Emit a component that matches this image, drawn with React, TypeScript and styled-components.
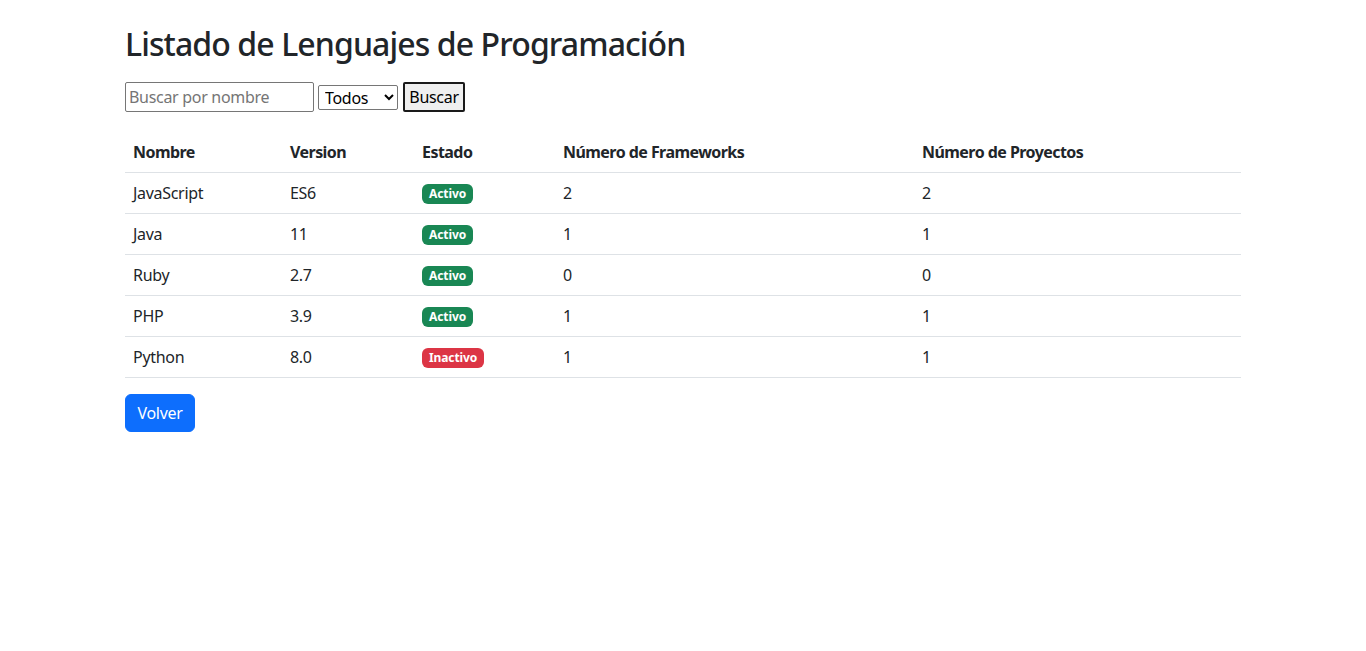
import React from 'react';
import styled, { createGlobalStyle } from 'styled-components';

const GlobalStyle = createGlobalStyle`
	* { box-sizing: border-box; }
	body {
		margin: 0;
		font-family: "Noto Sans", "Liberation Sans", sans-serif;
		font-size: 16px;
		line-height: 1.5;
		letter-spacing: -0.3px;
		color: #212529;
		background: #fff;
	}
`;

const Container = styled.div`
	width: 1140px;
	margin: 0 auto;
	padding: 25px 12px 0;
`;

const Title = styled.h2`
	margin: 0 0 19px;
	font-size: 32px;
	font-weight: 500;
	line-height: 38px;
	letter-spacing: -0.9px;
`;

const SearchForm = styled.form`
	display: flex;
	align-items: center;
	gap: 4px;
	margin-bottom: 20px;
`;

const SearchInput = styled.input`
	width: 189px;
	height: 30px;
	padding: 1px 3px;
	border: 1px solid #767676;
	border-radius: 2px;
	font: inherit;
	letter-spacing: -0.3px;
	color: #212529;
	&::placeholder { color: #757575; }
`;

const FilterSelect = styled.select`
	width: 80px;
	height: 25px;
	padding: 0 2px;
	border: 1px solid #767676;
	border-radius: 2px;
	font: inherit;
	letter-spacing: -0.3px;
	line-height: 1.2;
	background: #fff;
	color: #000;
`;

const SearchButton = styled.button`
	width: 62px;
	height: 30px;
	padding: 0 4px;
	margin-left: 1px;
	border: 2px solid #1a1a1a;
	border-radius: 2px;
	background: #efefef;
	font: inherit;
	letter-spacing: -0.3px;
	color: #000;
`;

const Table = styled.table`
	width: 100%;
	border-collapse: collapse;
	margin-bottom: 16px;
`;

const Th = styled.th<{ $w?: number }>`
	width: ${p => (p.$w ? `${p.$w}px` : 'auto')};
	padding: 8px;
	text-align: left;
	font-weight: 700;
	letter-spacing: -0.55px;
	border-bottom: 1px solid #dee2e6;
`;

const Td = styled.td`
	padding: 8px;
	border-bottom: 1px solid #dee2e6;
`;

const Badge = styled.span<{ $active: boolean }>`
	display: inline-block;
	padding: 4px 7px 4px;
	font-size: 12px;
	font-weight: 700;
	line-height: 1;
	letter-spacing: -0.1px;
	color: #fff;
	border-radius: 6px;
	vertical-align: 1px;
	background: ${p => (p.$active ? '#198754' : '#dc3545')};
`;

const BackButton = styled.button`
	width: 70px;
	padding: 6px 0;
	border: 1px solid #0d6efd;
	border-radius: 6px;
	background: #0d6efd;
	color: #fff;
	font: inherit;
	letter-spacing: -0.3px;
	line-height: 1.5;
	cursor: pointer;
`;

const languages = [
	{ nombre: 'JavaScript', version: 'ES6', activo: true, frameworks: 2, proyectos: 2 },
	{ nombre: 'Java', version: '11', activo: true, frameworks: 1, proyectos: 1 },
	{ nombre: 'Ruby', version: '2.7', activo: true, frameworks: 0, proyectos: 0 },
	{ nombre: 'PHP', version: '3.9', activo: true, frameworks: 1, proyectos: 1 },
	{ nombre: 'Python', version: '8.0', activo: false, frameworks: 1, proyectos: 1 }
];

export default function App() {
	return (
		<>
			<GlobalStyle />
			<Container>
				<Title>Listado de Lenguajes de Programación</Title>
				<SearchForm onSubmit={e => e.preventDefault()}>
					<SearchInput type="text" placeholder="Buscar por nombre" />
					<FilterSelect defaultValue="todos">
						<option value="todos">Todos</option>
						<option value="activo">Activo</option>
						<option value="inactivo">Inactivo</option>
					</FilterSelect>
					<SearchButton type="submit">Buscar</SearchButton>
				</SearchForm>
				<Table>
					<thead>
						<tr>
							<Th $w={157}>Nombre</Th>
							<Th $w={132}>Version</Th>
							<Th $w={141}>Estado</Th>
							<Th $w={359}>Número de Frameworks</Th>
							<Th>Número de Proyectos</Th>
						</tr>
					</thead>
					<tbody>
						{languages.map(lang => (
							<tr key={lang.nombre}>
								<Td>{lang.nombre}</Td>
								<Td>{lang.version}</Td>
								<Td>
									<Badge $active={lang.activo}>
										{lang.activo ? 'Activo' : 'Inactivo'}
									</Badge>
								</Td>
								<Td>{lang.frameworks}</Td>
								<Td>{lang.proyectos}</Td>
							</tr>
						))}
					</tbody>
				</Table>
				<BackButton type="button">Volver</BackButton>
			</Container>
		</>
	);
}
